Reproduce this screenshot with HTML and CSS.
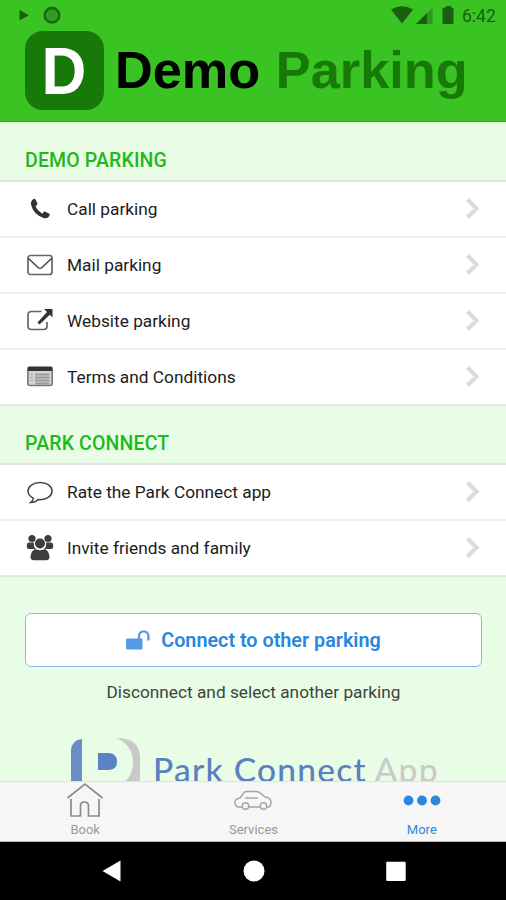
FILE: index.html
```html
<!DOCTYPE html>
<html lang="en">
<head>
    <meta charset="UTF-8">
    <meta name="viewport" content="width=device-width, initial-scale=1.0">
    <title>Demo Parking - More</title>
    <link rel="stylesheet" href="styles.css">
</head>
<body>
    <div class="app">
        <header class="header">
            <div class="status-bar">
                <svg class="status-left" width="50" height="30" viewBox="0 0 50 30">
                    <path d="M4.500 10l9.500 5.300L4.500 20.500z" fill="#17600f"/>
                    <circle cx="37" cy="15.300" r="7.300" fill="#2f9d20" stroke="#1a6510" stroke-width="2.400"/>
                </svg>
                <svg class="status-right" width="70" height="30" viewBox="0 0 70 30">
                    <path d="M0 9.500Q11 3 22 9.500L11 23.500z" fill="#175f0e"/>
                    <path d="M25 24L41.500 7.500V24z" fill="#2c9a1d"/>
                    <path d="M25 24L36 13v11z" fill="#175f0e"/>
                    <path d="M51.500 9q0-1.500 1.500-1.500h2V6h5v1.500h1q1.500 0 1.500 1.500v13.500q0 1.500-1.500 1.500h-8q-1.500 0-1.500-1.500z" fill="#175f0e"/>
                </svg>
                <span class="clock">6:42</span>
            </div>
            <div class="brand">
                <div class="brand-icon"><span>D</span></div>
                <h1 class="brand-name">Demo <span>Parking</span></h1>
            </div>
        </header>

        <main class="content">
            <h2 class="section-title">DEMO PARKING</h2>
            <ul class="list">
                <li class="item">
                    <svg class="item-icon" viewBox="0 0 28 28">
                        <path d="M7.500 4q-3 2-2.500 5.500Q7 19 17.500 23q4 1.200 6-2.200.8-1.600-.6-2.300l-3.600-1.800q-1.200-.5-1.900.5l-1.200 1.500Q11.300 15.500 9.500 11.500L11 9.800q.7-.7.2-1.800L9.500 4.500Q8.800 3.300 7.500 4z" fill="#333"/>
                    </svg>
                    <span class="item-label">Call parking</span>
                    <svg class="chevron" viewBox="0 0 16 24"><path d="M2.500 2.500L11.500 11.500L2.500 20.500"/></svg>
                </li>
                <li class="item">
                    <svg class="item-icon" viewBox="0 0 28 28">
                        <rect x="2" y="4.500" width="24" height="19" rx="2.500" fill="none" stroke="#666" stroke-width="1.700"/>
                        <path d="M2.500 7.500L12 16.500Q14 18 16 16.500L25.500 7.500" fill="none" stroke="#444" stroke-width="1.500"/>
                    </svg>
                    <span class="item-label">Mail parking</span>
                    <svg class="chevron" viewBox="0 0 16 24"><path d="M2.500 2.500L11.500 11.500L2.500 20.500"/></svg>
                </li>
                <li class="item">
                    <svg class="item-icon" viewBox="0 0 28 28">
                        <path d="M15.500 4.500H5.500Q2 4.500 2 8v11q0 3.500 3.500 3.500h12.500q3 0 3-3.500v-4" fill="none" stroke="#666" stroke-width="1.700"/>
                        <path d="M18 2h8.500v8.500l-2.700-2.700L13.500 17.500l-2-2L21 5z" fill="#333"/>
                    </svg>
                    <span class="item-label">Website parking</span>
                    <svg class="chevron" viewBox="0 0 16 24"><path d="M2.500 2.500L11.500 11.500L2.500 20.500"/></svg>
                </li>
                <li class="item">
                    <svg class="item-icon" viewBox="0 0 28 28">
                        <rect x="1.900" y="4" width="24.300" height="18.500" rx="2" fill="#d4d4d4" stroke="#777" stroke-width="1.600"/>
                        <path d="M2 4h24v4H2z" fill="#333"/>
                        <path d="M9 11.500h14.500M9 14.500h14.500M9 17.500h14.500M9 20.500h14.500" stroke="#999" stroke-width="1.800"/>
                        <path d="M4.500 11.500h2M4.500 14.500h2M4.500 17.500h2" stroke="#aaa" stroke-width="1.500"/>
                    </svg>
                    <span class="item-label">Terms and Conditions</span>
                    <svg class="chevron" viewBox="0 0 16 24"><path d="M2.500 2.500L11.500 11.500L2.500 20.500"/></svg>
                </li>
            </ul>

            <h2 class="section-title second">PARK CONNECT</h2>
            <ul class="list">
                <li class="item">
                    <svg class="item-icon" viewBox="0 0 28 28">
                        <path d="M14 4.500C7 4.500 2 8.500 2 13q0 4.500 5.500 7.300Q7 22.500 4.500 24.500q5 0 7.500-3l2 .2c7 0 12-3.700 12-8.700S21 4.500 14 4.500z" fill="none" stroke="#444" stroke-width="1.500"/>
                    </svg>
                    <span class="item-label">Rate the Park Connect app</span>
                    <svg class="chevron" viewBox="0 0 16 24"><path d="M2.500 2.500L11.500 11.500L2.500 20.500"/></svg>
                </li>
                <li class="item">
                    <svg class="item-icon" viewBox="0 0 28 28">
                        <g fill="#3d3d3d">
                            <circle cx="6" cy="4.500" r="3.600"/>
                            <circle cx="22" cy="4.500" r="3.600"/>
                            <path d="M.8 11q0-2.500 2.200-2.500h5q-.7 4 1.800 6.500H3q-2.200 0-2.200-2zM27.200 11q0-2.500-2.200-2.500h-5q.7 4-1.800 6.500H25q2.200 0 2.200-2z"/>
                            <circle cx="14" cy="9.500" r="5"/>
                            <path d="M9.500 15q4.500 2.500 9 0 4.500 1.500 5 8 0 3-3 3.200H7.500q-3-.2-3-3.200.5-6.500 5-8z"/>
                        </g>
                    </svg>
                    <span class="item-label">Invite friends and family</span>
                    <svg class="chevron" viewBox="0 0 16 24"><path d="M2.500 2.500L11.500 11.500L2.500 20.500"/></svg>
                </li>
            </ul>

            <div class="connect">
                <button type="button" class="connect-btn">
                    <svg width="24" height="22" viewBox="0 0 24 22">
                        <rect x="0" y="8.500" width="16.500" height="11" rx="1" fill="#539be2"/>
                        <path d="M13 9V6a4.700 4.700 0 0 1 9.400 0v4.500" fill="none" stroke="#539be2" stroke-width="2.300"/>
                    </svg>
                    <span>Connect to other parking</span>
                </button>
                <p class="connect-hint">Disconnect and select another parking</p>
            </div>

            <div class="app-logo">
                <svg class="app-mark" width="70" height="44" viewBox="0 0 70 44">
                    <path d="M0 44V12Q1 2 11 1v43z" fill="#6c8cc6"/>
                    <path d="M27 15h10q9 0 9 8.500T37 32H27z" fill="#5b82c5"/>
                    <path d="M46 0Q69 0 69 20v24H53q9-6 9-20Q62 8 46 0z" fill="#c9cac8"/>
                </svg>
                <div class="app-name">Park Connect <span>App</span></div>
            </div>
        </main>

        <nav class="tabs">
            <a class="tab">
                <svg width="38" height="36" viewBox="0 0 38 36">
                    <path d="M1.500 16L19 2l17.500 14M5 17v17h9.500V24q0-4 4-4t4 4v10H33V17" fill="none" stroke="#8b8b8b" stroke-width="1.700"/>
                </svg>
                <span>Book</span>
            </a>
            <a class="tab">
                <svg width="38" height="36" viewBox="0 0 38 36">
                    <g fill="none" stroke="#a5a5a5" stroke-width="1.400">
                        <path d="M8 25H4q-3-1-3-5 0-3 5-4l4-5.500q1-1 3-1h9q3 0 5 2l4 3.500q6 .5 6 5 0 4-2 5h-2M15 25h11"/>
                        <path d="M11 16h13"/>
                        <circle cx="11.500" cy="24" r="3.200"/>
                        <circle cx="29.500" cy="24" r="3.200"/>
                    </g>
                </svg>
                <span>Services</span>
            </a>
            <a class="tab active">
                <svg width="38" height="36" viewBox="0 0 38 36">
                    <g fill="#2c86e0">
                        <circle cx="5.500" cy="18.500" r="4.900"/>
                        <circle cx="19" cy="18.500" r="4.900"/>
                        <circle cx="32.500" cy="18.500" r="4.900"/>
                    </g>
                </svg>
                <span>More</span>
            </a>
        </nav>

        <div class="system-nav">
            <svg width="22" height="22" viewBox="0 0 22 22"><path d="M1.500 11L19.500 .5v21z" fill="#fff"/></svg>
            <svg width="22" height="22" viewBox="0 0 22 22"><circle cx="11" cy="11" r="10.500" fill="#fff"/></svg>
            <svg width="22" height="22" viewBox="0 0 22 22"><rect x="1.200" y="1.700" width="19.500" height="19.300" rx="1" fill="#fff"/></svg>
        </div>
    </div>
</body>
</html>
```
FILE: styles.css
```css
* {
    margin: 0;
    padding: 0;
    box-sizing: border-box;
}

body {
    font-family: Roboto, "Liberation Sans", sans-serif;
    height: 100vh;
    overflow: hidden;
}

.app {
    display: flex;
    flex-direction: column;
    width: 100%;
    height: 100vh;
}

/* Header */
.header {
    height: 122px;
    background: #39c423;
    border-bottom: 1px solid #13b31a;
}

.status-bar {
    display: flex;
    align-items: center;
    height: 30px;
    padding: 0 8px 0 15px;
}

.status-right {
    margin-left: auto;
}

.clock {
    width: 36px;
    margin-left: 1px;
    padding-top: 2px;
    font-size: 17.5px;
    color: #17600f;
    white-space: nowrap;
}

.brand {
    display: flex;
    align-items: center;
    padding-left: 25px;
}

.brand-icon {
    width: 79px;
    height: 79px;
    border-radius: 18px;
    background: #177a08;
    color: #fff;
    font: bold 66px/80px "Liberation Sans", Arial, sans-serif;
    text-align: center;
    padding-right: 2px;
}

.brand-icon span {
    display: inline-block;
    transform: scaleX(0.94);
}

.brand-name {
    margin-left: 11px;
    font: bold 52.3px/80px "Liberation Sans", Arial, sans-serif;
    color: #000;
    white-space: nowrap;
}

.brand-name span {
    margin-left: 1px;
    color: #177a08;
}

/* Content */
.content {
    height: 659px;
    background: #e8fce6;
    overflow: hidden;
}

.section-title {
    height: 58px;
    padding: 28px 25px 0;
    font-size: 19.5px;
    line-height: 22px;
    font-weight: 500;
    letter-spacing: 0.15px;
    color: #1dba1a;
}

.section-title.second {
    height: 57px;
    padding-top: 27px;
}

.list {
    list-style: none;
    background: #fff;
    border-top: 2px solid #dce6dc;
    border-bottom: 1px solid #dce6dc;
}

.item {
    display: flex;
    align-items: center;
    height: 56px;
    padding: 0 25px 0 26px;
    border-bottom: 2px solid #ededed;
}

.item:last-child {
    height: 55px;
    border-bottom: 1px solid #e6ece6;
}

.item-icon {
    width: 28px;
    height: 28px;
}

.item-label {
    flex: 1;
    margin-left: 13px;
    font-size: 17.3px;
    line-height: 20px;
    padding-bottom: 1px;
    color: #1c1c1c;
}

.chevron {
    width: 16px;
    height: 24px;
    fill: none;
    stroke: #dcdcdc;
    stroke-width: 4.2;
}

.connect {
    padding: 36px 24px 0 25px;
    text-align: center;
}

.connect-btn {
    display: flex;
    align-items: center;
    justify-content: center;
    gap: 11px;
    width: 100%;
    height: 54px;
    padding-top: 1px;
    background: #fff;
    border: 1.5px solid #8eb6ea;
    border-radius: 6px;
    font-family: inherit;
    font-size: 19.8px;
    font-weight: 600;
    color: #2787dc;
}

.connect-hint {
    margin-top: 14px;
    font-size: 17.25px;
    line-height: 22px;
    color: #3c453c;
}

.app-logo {
    display: flex;
    margin-top: 35px;
    padding-left: 71px;
}

.app-name {
    margin-left: 12px;
    font: 500 33.5px/62px Lato, sans-serif;
    letter-spacing: 1.25px;
    color: #5b7fc0;
    white-space: nowrap;
}

.app-name span {
    margin-left: -2px;
    color: #c8cbc7;
}

/* Bottom bars */
.tabs {
    display: flex;
    height: 61px;
    padding-left: 1px;
    background: #f6f6f6;
    border-top: 1px solid #e0e3e0;
    border-bottom: 1px solid #b5b5b5;
}

.tab {
    flex: 1;
    display: flex;
    flex-direction: column;
    align-items: center;
    font-size: 13px;
    line-height: 16px;
    color: #999;
}

.tab span {
    margin-top: 4px;
}

.tab.active {
    color: #2c86e0;
}

.system-nav {
    display: flex;
    align-items: center;
    justify-content: space-between;
    height: 58px;
    padding: 0 99px 0 101px;
    background: #000;
}
```
